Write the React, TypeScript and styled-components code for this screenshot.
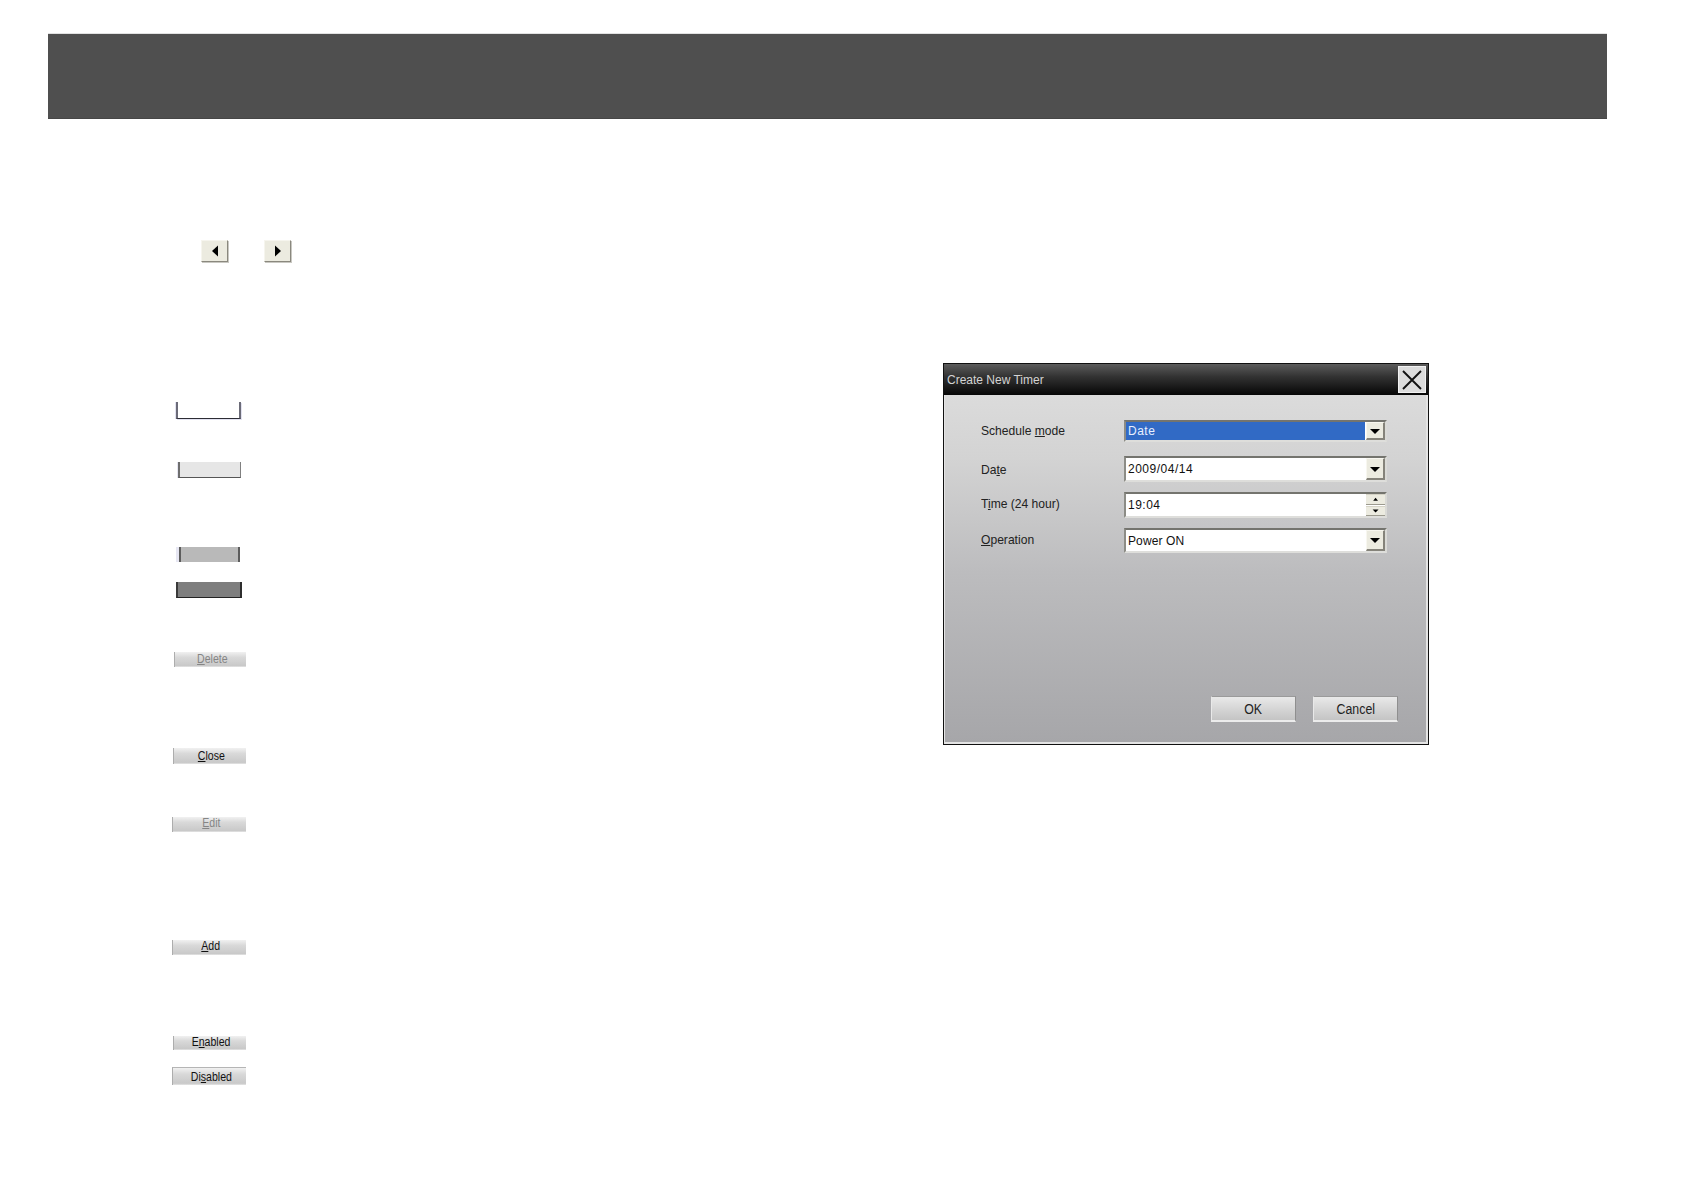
import React from "react";
import styled, { createGlobalStyle, css } from "styled-components";

const Global = createGlobalStyle`
  html, body { margin: 0; padding: 0; background: #fff; }
  body { font-family: "Liberation Sans", Arial, sans-serif; }
`;

const Page = styled.div`
  width: 1684px;
  height: 1190px;
  overflow: hidden;
  padding-top: 33px;
  box-sizing: border-box;
`;

const Header = styled.header`
  margin: 0 76px 0 48px;
  width: 1559px;
  height: 86px;
  box-sizing: border-box;
  background: #4f4f4f;
  border-top: 1px solid #e2e2e2;
  border-bottom: 1px solid #464646;
`;

const Content = styled.main`
  display: flex;
  justify-content: space-between;
  padding: 0 255px 0 172px;
`;

const LeftColumn = styled.section`
  display: flex;
  flex-direction: column;
  width: 120px;
  padding-top: 121px;
`;

const ArrowRow = styled.div`
  display: flex;
  gap: 36px;
  padding-left: 29px;
`;

const ArrowButton = styled.div`
  width: 27px;
  height: 22px;
  box-sizing: border-box;
  display: flex;
  align-items: center;
  justify-content: center;
  background: #ecebe0;
  border-top: 1px solid #f6f5ee;
  border-left: 1px solid #f6f5ee;
  border-right: 1px solid #8a887e;
  border-bottom: 1px solid #8a887e;
  box-shadow: 1px 1px 0 #c9c8c2;
`;

const swatchStyles = {
  empty: css`
    background: #fff;
    border-left: 2px solid #6b6b78;
    border-right: 2px solid #6b6b78;
    border-bottom: 1px solid #2c2c34;
    box-shadow: -1px 0 0 #e2e2f0, 1px 1px 0 #e2e2f0;
  `,
  light: css`
    background: #e6e6e6;
    border-left: 2px solid #6e6e6e;
    border-right: 1px solid #808080;
    border-bottom: 1px solid #555;
    box-shadow: -1px 0 0 #e6e6f2;
  `,
  mid: css`
    background: #b9b9b9;
    border-left: 2px solid #5c5c5c;
    border-right: 2px solid #5c5c5c;
    box-shadow: -3px 0 0 #e6e6f2;
  `,
  dark: css`
    background: #7e7e7e;
    border-left: 2px solid #3a3a3a;
    border-right: 2px solid #2e2e2e;
    border-bottom: 1px solid #222;
  `,
};

const Swatch = styled.div<{ $kind: keyof typeof swatchStyles; $top: number; $left: number; $w: number; $h: number }>`
  box-sizing: border-box;
  width: ${(p) => p.$w}px;
  height: ${(p) => p.$h}px;
  margin-top: ${(p) => p.$top}px;
  margin-left: ${(p) => p.$left}px;
  ${(p) => swatchStyles[p.$kind]}
`;

const ToolButton = styled.div<{ $top: number; $left: number; $h: number; $up: number; $disabled?: boolean; $framed?: boolean }>`
  box-sizing: border-box;
  width: ${(p) => 74 - p.$left}px;
  height: ${(p) => p.$h}px;
  margin-top: ${(p) => p.$top}px;
  margin-left: ${(p) => p.$left}px;
  padding: 0 0 ${(p) => p.$up}px 3px;
  display: flex;
  align-items: center;
  justify-content: center;
  font-size: 12px;
  line-height: 12px;
  color: ${(p) => (p.$disabled ? "#858585" : "#111")};
  background: linear-gradient(#f1f1f1, #d9d9d9 35%, #c9c9c9 90%, #e6e6e6);
  border-left: 1px solid #adadad;
  ${(p) => p.$framed && "border-top: 1px solid #b5b5b5;"}
`;

const ToolLabel = styled.span`
  display: inline-block;
  transform: scaleX(0.88);
  white-space: nowrap;
`;

const Dialog = styled.section`
  box-sizing: border-box;
  width: 486px;
  height: 382px;
  margin-top: 244px;
  display: flex;
  flex-direction: column;
  border: 1px solid #111;
  background: linear-gradient(#dfdfdf 0%, #d3d3d3 25%, #bcbcbe 55%, #a6a6a9 100%);
  box-shadow: inset -2px -2px 0 #e4e4e4, inset 1px 0 0 #e4e4e4;
`;

const TitleBar = styled.div`
  height: 31px;
  flex: none;
  display: flex;
  align-items: center;
  justify-content: space-between;
  padding: 0 2px 0 3px;
  background: linear-gradient(#5c5c5c, #333 40%, #060606);
  color: #d4d4d4;
  font-size: 12px;
`;

const CloseButton = styled.div`
  width: 28px;
  height: 27px;
  box-sizing: border-box;
  display: flex;
  align-items: center;
  justify-content: center;
  background: #dcdcdc;
  border: 1px solid #f2f2f2;
`;

const Form = styled.div`
  display: flex;
  flex-direction: column;
  gap: 10px;
  padding: 25px 40px 0 37px;
`;

const Row = styled.div<{ $h: number; $extra?: number }>`
  display: grid;
  grid-template-columns: 143px 263px;
  align-items: center;
  height: ${(p) => p.$h}px;
  margin-bottom: ${(p) => p.$extra ?? 0}px;
`;

const Label = styled.span<{ $shift?: number }>`
  display: inline-block;
  font-size: 13px;
  color: #222;
  white-space: nowrap;
  transform: scaleX(0.93);
  transform-origin: left center;
  padding-bottom: ${(p) => p.$shift ?? 0}px;
`;

const Field = styled.div`
  box-sizing: border-box;
  height: 100%;
  display: flex;
  align-items: stretch;
  background: #fff;
  border-top: 2px solid #74746e;
  border-left: 2px solid #8c8c86;
  border-right: 2px solid #dadad6;
  border-bottom: 2px solid #dededb;
`;

const Value = styled.span<{ $selected?: boolean; $tight?: boolean }>`
  flex: 1;
  display: flex;
  align-items: center;
  padding-left: 2px;
  font-size: 12px;
  letter-spacing: ${(p) => (p.$tight ? "0.1px" : "0.5px")};
  color: ${(p) => (p.$selected ? "#e8f0ff" : "#111")};
  background: ${(p) => (p.$selected ? "#316ac5" : "#fff")};
`;

const DropButton = styled.div`
  width: 19px;
  flex: none;
  box-sizing: border-box;
  margin-left: 1px;
  display: flex;
  align-items: center;
  justify-content: center;
  background: #ecebe0;
  border-top: 1px solid #f8f7f0;
  border-left: 1px solid #f8f7f0;
  border-right: 2px solid #85837a;
  border-bottom: 2px solid #85837a;
`;

const Spin = styled.div`
  width: 19px;
  flex: none;
  display: flex;
  flex-direction: column;
  gap: 1px;
`;

const SpinButton = styled.div`
  flex: 1;
  box-sizing: border-box;
  display: flex;
  align-items: center;
  justify-content: center;
  background: #ecebe0;
  border-top: 1px solid #d5d3c6;
  border-bottom: 1px solid #9c9a8e;
`;

const Actions = styled.div`
  margin-top: auto;
  display: flex;
  justify-content: flex-end;
  gap: 17px;
  padding: 0 30px 22px 0;
`;

const ActionButton = styled.div`
  width: 85px;
  height: 26px;
  box-sizing: border-box;
  display: flex;
  align-items: center;
  justify-content: center;
  color: #222;
  background: linear-gradient(#e9e9e9, #d6d6d6 50%, #c4c4c4);
  border: 1px solid #8f8f8f;
  border-left-color: #e9e9e9;
  border-bottom: 2px solid #ececec;
  border-top-color: #9a9a9a;
`;

const ActionLabel = styled.span`
  display: inline-block;
  font-size: 14px;
  transform: scaleX(0.88);
`;

const Tri = ({ dir, size = 1 }: { dir: "left" | "right" | "up" | "down"; size?: number }) => {
  const pts = {
    left: "9,0.5 9,11.5 3,6",
    right: "3,0.5 3,11.5 9,6",
    up: "6,3 10,8 2,8",
    down: "1,4 11,4 6,9",
  }[dir];
  const w = 12 * size;
  return (
    <svg width={w} height={w} viewBox="0 0 12 12" aria-hidden="true">
      <polygon points={pts} fill="#000" />
    </svg>
  );
};

const buttons = [
  { top: 54, left: 2, h: 15, up: 2, m: "D", rest: "elete", disabled: true },
  { top: 81, left: 1, h: 16, up: 1, m: "C", rest: "lose" },
  { top: 53, left: 0, h: 15, up: 3, m: "E", rest: "dit", disabled: true },
  { top: 108, left: 0, h: 15, up: 3, m: "A", rest: "dd" },
];

export default function App() {
  return (
    <Page>
      <Global />
      <Header />
      <Content>
        <LeftColumn>
          <ArrowRow>
            <ArrowButton><Tri dir="left" /></ArrowButton>
            <ArrowButton><Tri dir="right" /></ArrowButton>
          </ArrowRow>
          <Swatch $kind="empty" $top={140} $left={4} $w={65} $h={17} />
          <Swatch $kind="light" $top={43} $left={6} $w={63} $h={16} />
          <Swatch $kind="mid" $top={69} $left={7} $w={61} $h={15} />
          <Swatch $kind="dark" $top={20} $left={4} $w={66} $h={16} />
          {buttons.map((b) => (
            <ToolButton key={b.m} $top={b.top} $left={b.left} $h={b.h} $up={b.up} $disabled={b.disabled}>
              <ToolLabel><u>{b.m}</u>{b.rest}</ToolLabel>
            </ToolButton>
          ))}
          <ToolButton $top={81} $left={1} $h={14} $up={2}>
            <ToolLabel>E<u>n</u>abled</ToolLabel>
          </ToolButton>
          <ToolButton $top={17} $left={0} $h={18} $up={0} $framed>
            <ToolLabel>Di<u>s</u>abled</ToolLabel>
          </ToolButton>
        </LeftColumn>
        <Dialog>
          <TitleBar>
            <span>Create New Timer</span>
            <CloseButton>
              <svg width="22" height="22" viewBox="0 0 22 22" aria-hidden="true">
                <path d="M2 2 L20 20 M20 2 L2 20" stroke="#111" strokeWidth="1.9" fill="none" />
              </svg>
            </CloseButton>
          </TitleBar>
          <Form>
            <Row $h={22} $extra={4}>
              <Label $shift={2}>Schedule <u>m</u>ode</Label>
              <Field>
                <Value $selected>Date</Value>
                <DropButton><Tri dir="down" /></DropButton>
              </Field>
            </Row>
            <Row $h={26}>
              <Label>Da<u>t</u>e</Label>
              <Field>
                <Value>2009/04/14</Value>
                <DropButton><Tri dir="down" /></DropButton>
              </Field>
            </Row>
            <Row $h={26}>
              <Label $shift={4}>T<u>i</u>me (24 hour)</Label>
              <Field>
                <Value>19:04</Value>
                <Spin>
                  <SpinButton><Tri dir="up" size={0.6} /></SpinButton>
                  <SpinButton><Tri dir="down" size={0.6} /></SpinButton>
                </Spin>
              </Field>
            </Row>
            <Row $h={25}>
              <Label $shift={2}><u>O</u>peration</Label>
              <Field>
                <Value $tight>Power ON</Value>
                <DropButton><Tri dir="down" /></DropButton>
              </Field>
            </Row>
          </Form>
          <Actions>
            <ActionButton><ActionLabel>OK</ActionLabel></ActionButton>
            <ActionButton><ActionLabel>Cancel</ActionLabel></ActionButton>
          </Actions>
        </Dialog>
      </Content>
    </Page>
  );
}
